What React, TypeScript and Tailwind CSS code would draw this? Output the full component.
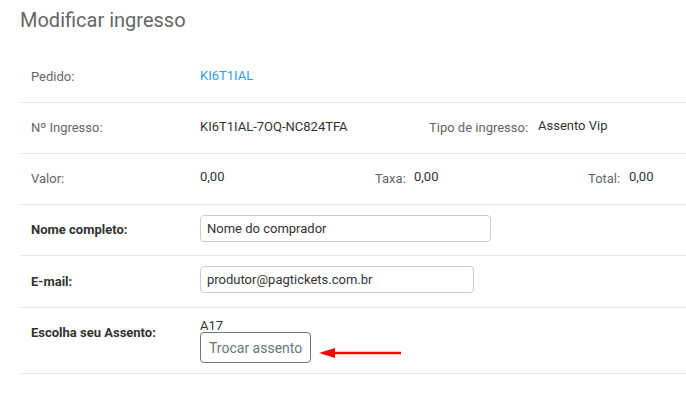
import React from "react";

export default function App() {
  return (
    <div
      className="w-[686px] h-[394px] bg-white overflow-hidden pl-[20px]"
      style={{ fontFamily: "Roboto, 'Liberation Sans', sans-serif" }}
    >
      <div className="pt-[8px] h-[52px]">
        <h1 className="text-[20px] leading-[24px] text-[#666] font-normal">Modificar ingresso</h1>
      </div>

      {/* Pedido */}
      <div className="flex items-center h-[51px] border-b border-[#e6e6e6] text-[13px]">
        <div className="w-[180px] pl-[11px] text-[#666] leading-[20px]">Pedido:</div>
        <div className="text-[#2d9ff0] mb-[3px] leading-[20px]">KI6T1IAL</div>
      </div>

      {/* Nº Ingresso */}
      <div className="flex items-center h-[51px] border-b border-[#e6e6e6] text-[13px]">
        <div className="w-[180px] pl-[11px] text-[#666] leading-[20px]">Nº Ingresso:</div>
        <div className="w-[229px] text-[#333] mb-[3px] leading-[20px]">KI6T1IAL-7OQ-NC824TFA</div>
        <div className="w-[109px] text-[#666] leading-[20px]">Tipo de ingresso:</div>
        <div className="text-[#333] mb-[4px] leading-[20px]">Assento Vip</div>
      </div>

      {/* Valor */}
      <div className="flex items-center h-[51px] border-b border-[#e6e6e6] text-[13px]">
        <div className="w-[180px] pl-[11px] text-[#666] leading-[20px]">Valor:</div>
        <div className="w-[175px] text-[#333] mb-[5px] leading-[20px]">0,00</div>
        <div className="w-[39px] text-[#666] leading-[20px]">Taxa:</div>
        <div className="w-[174px] text-[#333] mb-[5px] leading-[20px]">0,00</div>
        <div className="w-[41px] text-[#666] leading-[20px]">Total:</div>
        <div className="text-[#333] mb-[5px] leading-[20px]">0,00</div>
      </div>

      {/* Nome completo */}
      <div className="flex items-center h-[51px] border-b border-[#e6e6e6] text-[13px]">
        <div className="w-[180px] pl-[11px] text-[#333] font-bold leading-[20px]">Nome completo:</div>
        <div className="mb-[3px]">
          <input
            readOnly
            value="Nome do comprador"
            className="w-[291px] h-[27px] border border-[#cccccc] rounded-[4px] px-[6px] text-[13px] text-[#333] outline-none"
            style={{ fontFamily: "Roboto, 'Liberation Sans', sans-serif" }}
          />
        </div>
      </div>

      {/* E-mail */}
      <div className="flex items-center h-[52px] border-b border-[#e6e6e6] text-[13px]">
        <div className="w-[180px] pl-[11px] text-[#333] font-bold leading-[20px]">E-mail:</div>
        <div className="mb-[4px]">
          <input
            readOnly
            value="produtor@pagtickets.com.br"
            className="w-[274px] h-[27px] border border-[#cccccc] rounded-[4px] px-[6px] text-[13px] text-[#333] outline-none"
            style={{ fontFamily: "Roboto, 'Liberation Sans', sans-serif" }}
          />
        </div>
      </div>

      {/* Assento */}
      <div className="flex items-start h-[66px] border-b border-[#e6e6e6] text-[13px]">
        <div className="w-[180px] pl-[11px] pt-[15px] text-[#333] font-bold leading-[20px]">
          Escolha seu Assento:
        </div>
        <div className="pt-[11px]">
          <div className="text-[#333] leading-[13px] text-[13px]">A17</div>
          <div className="flex items-center">
            <button className="h-[31px] px-[8px] border border-[#6c757d] rounded-[4px] text-[14px] text-[#6c757d] leading-[20px] bg-white">
              Trocar assento
            </button>
            <svg width="84" height="12" viewBox="0 0 84 12" className="ml-[8px] mt-[10px]">
              <line x1="12" y1="6" x2="82" y2="6" stroke="#ff0000" strokeWidth="2.5" />
              <polygon points="0,6 16,1 16,11" fill="#ff0000" />
            </svg>
          </div>
        </div>
      </div>
    </div>
  );
}
